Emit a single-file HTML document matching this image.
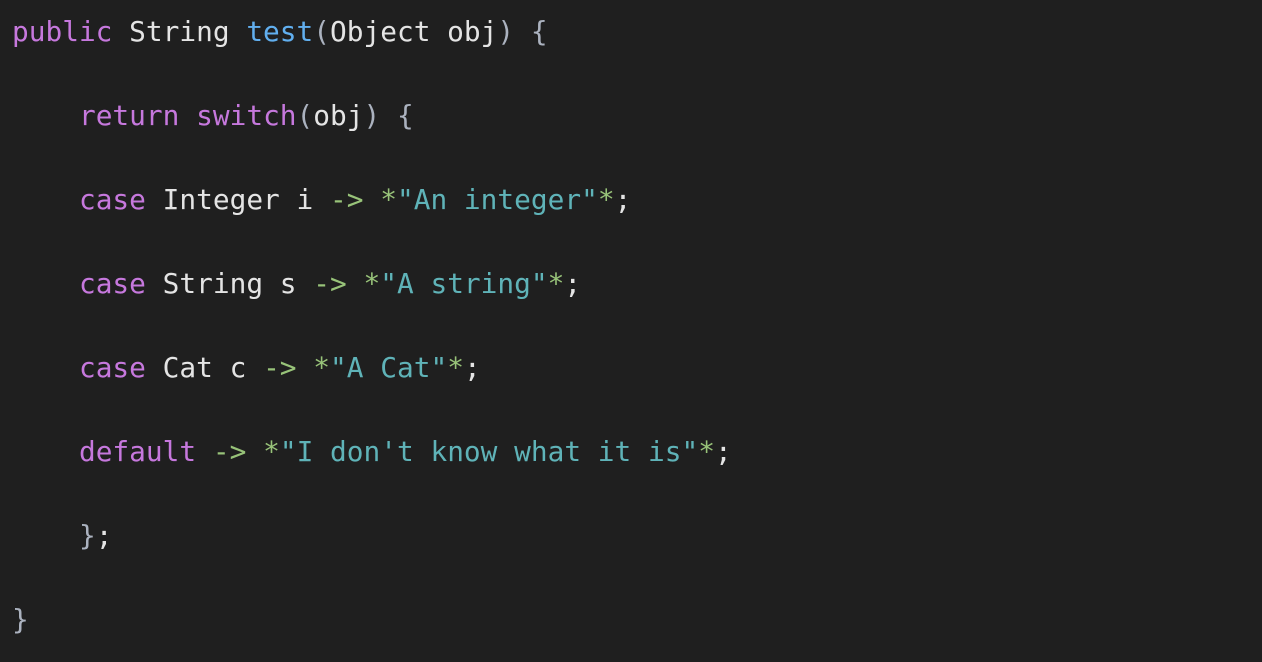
<!DOCTYPE html>
<html><head><meta charset="utf-8"><style>
html,body{margin:0;padding:0;background:#1f1f1f;width:1262px;height:646px;overflow:hidden}
pre{position:absolute;left:12px;top:-10px;margin:0;font-family:"DejaVu Sans Mono","Liberation Mono",monospace;font-size:27.8px;line-height:84px;color:#e4e4e4;white-space:pre}
.k{color:#c678dd}.f{color:#61afef}.p{color:#abb2bf}.a{color:#98c379}.s{color:#5fb3b8}
</style></head><body>
<pre><span class="k">public</span> String <span class="f">test</span><span class="p">(</span>Object obj<span class="p">)</span> <span class="p">{</span>
    <span class="k">return</span> <span class="k">switch</span><span class="p">(</span>obj<span class="p">)</span> <span class="p">{</span>
    <span class="k">case</span> Integer i <span class="a">-&gt;</span> <span class="a">*</span><span class="s">"An integer"</span><span class="a">*</span>;
    <span class="k">case</span> String s <span class="a">-&gt;</span> <span class="a">*</span><span class="s">"A string"</span><span class="a">*</span>;
    <span class="k">case</span> Cat c <span class="a">-&gt;</span> <span class="a">*</span><span class="s">"A Cat"</span><span class="a">*</span>;
    <span class="k">default</span> <span class="a">-&gt;</span> <span class="a">*</span><span class="s">"I don't know what it is"</span><span class="a">*</span>;
    <span class="p">}</span>;
<span class="p">}</span></pre>
</body></html>
